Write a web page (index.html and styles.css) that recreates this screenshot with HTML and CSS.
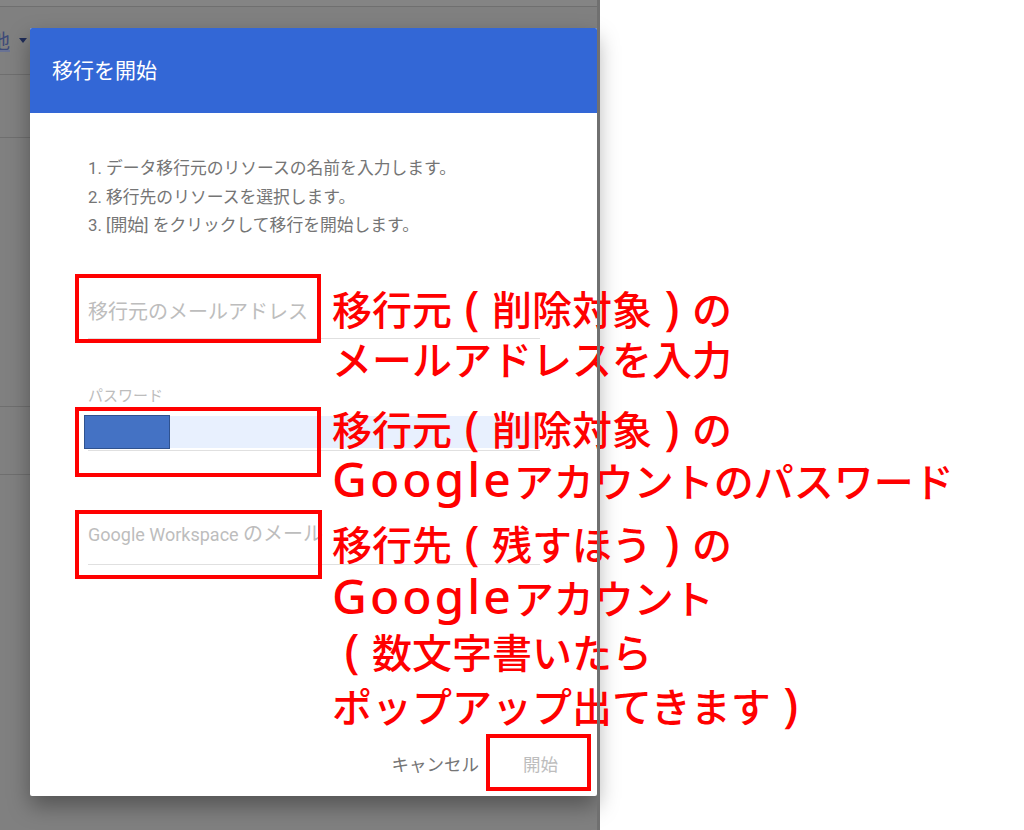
FILE: index.html
```html
<!DOCTYPE html>
<html lang="ja">
<head>
    <meta charset="UTF-8">
    <title>移行を開始</title>
    <link rel="stylesheet" href="styles.css">
</head>
<body>
    <div class="screen">
        <div class="backdrop">
            <div class="bg-row bg-top"></div>
            <div class="bg-row bg-toolbar">
                <span class="bg-link">地</span>
                <span class="bg-caret"></span>
            </div>
            <div class="bg-row bg-sub"></div>
            <div class="bg-row bg-list"></div>
            <div class="bg-row bg-item"></div>
        </div>
        <div class="divider"></div>
        <div class="blank"></div>
    </div>

    <div class="dialog">
        <div class="dialog-header">移行を開始</div>
        <div class="dialog-body">
            <ol class="steps">
                <li>1. データ移行元のリソースの名前を入力します。</li>
                <li>2. 移行先のリソースを選択します。</li>
                <li>3. [開始] をクリックして移行を開始します。</li>
            </ol>

            <div class="field field-source">
                <div class="input placeholder">移行元のメールアドレス</div>
            </div>

            <div class="field field-password">
                <div class="label">パスワード</div>
                <div class="input filled"><span class="censor"></span></div>
            </div>

            <div class="field field-target">
                <div class="input placeholder"><span class="latin">Google Workspace </span>のメール</div>
            </div>
        </div>
        <div class="dialog-footer">
            <button class="btn">キャンセル</button>
            <button class="btn disabled">開始</button>
        </div>
    </div>

    <!-- annotations drawn on top of the screenshot -->
    <div class="notes">
        <div class="mark mark-1"></div>
        <div class="mark mark-2"></div>
        <div class="mark mark-3"></div>
        <div class="mark mark-4"></div>

        <div class="note note-1">移行元<span class="pw">(</span>削除対象<span class="pw">)</span>の<br>メールアドレスを入力</div>
        <div class="note note-2">移行元<span class="pw">(</span>削除対象<span class="pw">)</span>の<br><span class="latin">Google</span>アカウントのパスワード</div>
        <div class="note note-3">移行先<span class="pw">(</span>残すほう<span class="pw">)</span>の<br><span class="latin">Google</span>アカウント<br><span class="pw">(</span>数文字書いたら<br>ポップアップ出てきます<span class="pw">)</span></div>
    </div>
</body>
</html>
```

FILE: styles.css
```css
body {
    margin: 0;
    width: 1024px;
    height: 830px;
    overflow: hidden;
    position: relative;
    font-family: Roboto, "Noto Sans CJK JP", sans-serif;
    background-color: white;
}
.screen {
    display: flex;
    height: 830px;
}
.backdrop {
    width: 597px;
    background-color: #808080;
    overflow: hidden;
}
.bg-row {
    border-bottom: 1px solid #6f6f6f;
}
.bg-top {
    height: 6px;
    background-color: #848484;
}
.bg-toolbar {
    height: 67px;
    display: flex;
    align-items: center;
    gap: 9px;
}
.bg-link {
    margin-left: -10px;
    font-size: 20px;
    color: #3d4a78;
    text-decoration: underline;
    text-decoration-color: #6a7394;
}
.bg-caret {
    width: 0;
    height: 0;
    border-left: 4px solid transparent;
    border-right: 4px solid transparent;
    border-top: 5px solid #1f2c58;
}
.bg-sub {
    height: 62px;
}
.bg-list {
    height: 268px;
}
.bg-item {
    height: 67px;
}
.divider {
    width: 3px;
    background-color: #707070;
    position: relative;
    z-index: 10;
}
.blank {
    flex: 1;
    background-color: white;
}

.dialog {
    position: absolute;
    left: 30px;
    top: 28px;
    width: 567px;
    height: 768px;
    background-color: white;
    border-radius: 2px;
    box-shadow: 0 10px 22px rgba(0,0,0,0.35);
    display: flex;
    flex-direction: column;
    overflow: hidden;
}
.dialog-header {
    height: 85px;
    background-color: #3367d6;
    color: white;
    font-size: 21px;
    padding-left: 22px;
    padding-bottom: 3px;
    box-sizing: border-box;
    display: flex;
    align-items: center;
}
.dialog-body {
    padding: 0 57px 0 58px;
}
.steps {
    list-style: none;
    margin: 41px 0 0 0;
    padding: 0;
    font-size: 16.8px;
    line-height: 28.5px;
    color: #757575;
}
.field-source {
    margin-top: 56px;
}
.field-password {
    margin-top: 48px;
}
.field-target {
    margin-top: 67px;
}
.input {
    height: 32px;
    line-height: 32px;
    padding-bottom: 10px;
    border-bottom: 1px solid #e0e0e0;
    font-size: 20px;
}
.field-target .input {
    padding-bottom: 14px;
}
.input .latin {
    font-size: 18px;
}
.placeholder {
    color: #bdbdbd;
}
.label {
    font-size: 15px;
    line-height: 18px;
    color: #bdbdbd;
}
.input.filled {
    margin-top: 11px;
    height: 32px;
    padding-bottom: 2px;
    background-color: #e8f0fe;
    background-clip: content-box;
    display: flex;
    align-items: stretch;
}
.censor {
    width: 84px;
    margin-left: -4px;
    margin-top: -1px;
    margin-bottom: -1px;
    background-color: #4472c4;
    border: 1px solid #2f528f;
}
.dialog-footer {
    margin-top: auto;
    display: flex;
    justify-content: flex-end;
    padding: 0 17px 11px 0;
}
.btn {
    height: 44px;
    padding: 0 22px;
    border: none;
    background: none;
    font-family: Roboto, "Noto Sans CJK JP", sans-serif;
    font-size: 17.5px;
    color: #757575;
}
.btn.disabled {
    color: #bdbdbd;
}

.notes {
    position: absolute;
    left: 0;
    top: 0;
    width: 1024px;
    height: 830px;
    z-index: 5;
    pointer-events: none;
}
.mark {
    position: absolute;
    border: 4px solid #ff0000;
    box-sizing: border-box;
}
.mark-1 {
    left: 75px;
    top: 274px;
    width: 246px;
    height: 69px;
}
.mark-2 {
    left: 75px;
    top: 407px;
    width: 246px;
    height: 70px;
}
.mark-3 {
    left: 75px;
    top: 510px;
    width: 247px;
    height: 69px;
}
.mark-4 {
    left: 486px;
    top: 734px;
    width: 105px;
    height: 57px;
}
.note {
    position: absolute;
    left: 332px;
    color: #ff0000;
    font-family: "Noto Sans CJK JP", sans-serif;
    font-weight: 500;
    font-size: 40px;
    white-space: nowrap;
}
.note .latin {
    font-family: "Noto Sans", sans-serif;
    font-weight: 500;
    font-size: 48px;
    letter-spacing: 3px;
    line-height: 0;
}
.note .pw {
    display: inline-block;
    width: 40px;
    text-align: center;
    font-family: "Noto Sans", sans-serif;
    font-weight: 500;
    font-size: 48px;
    line-height: 0;
}
.note-1 {
    top: 283px;
    line-height: 50px;
}
.note-2 {
    top: 402px;
    line-height: 52px;
}
.note-3 {
    top: 516px;
    line-height: 54px;
}
```
